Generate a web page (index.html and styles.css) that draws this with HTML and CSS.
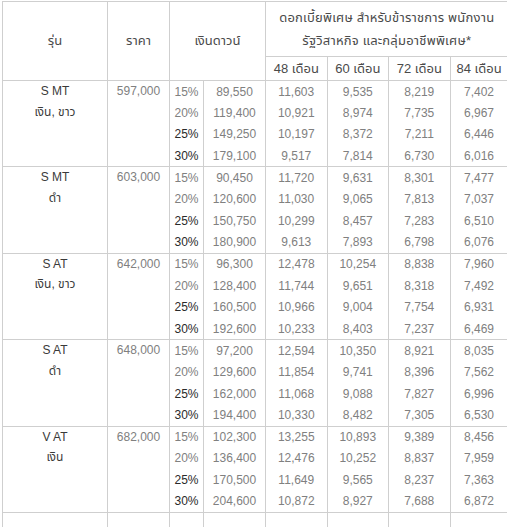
FILE: index.html
```html
<!DOCTYPE html>
<html lang="th">
<head>
<meta charset="utf-8">
<title>ตารางผ่อน</title>
<link rel="stylesheet" href="styles.css">
</head>
<body>
<table class="price-table">
  <colgroup>
    <col class="c-model"><col class="c-price"><col class="c-pct"><col class="c-down">
    <col class="c-m"><col class="c-m"><col class="c-m"><col class="c-last">
  </colgroup>
  <thead>
    <tr class="h1">
      <th rowspan="2">รุ่น</th>
      <th rowspan="2">ราคา</th>
      <th rowspan="2" colspan="2">เงินดาวน์</th>
      <th colspan="4" class="special">ดอกเบี้ยพิเศษ สำหรับข้าราชการ พนักงาน<br>รัฐวิสาหกิจ และกลุ่มอาชีพพิเศษ*</th>
    </tr>
    <tr class="h2">
      <th>48 เดือน</th><th>60 เดือน</th><th>72 เดือน</th><th>84 เดือน</th>
    </tr>
  </thead>
  <tbody>
    <tr><td rowspan="4" class="model">S MT<br>เงิน, ขาว</td><td rowspan="4" class="price">597,000</td><td class="pct">15%</td><td>89,550</td><td>11,603</td><td>9,535</td><td>8,219</td><td>7,402</td></tr>
    <tr><td class="pct">20%</td><td>119,400</td><td>10,921</td><td>8,974</td><td>7,735</td><td>6,967</td></tr>
    <tr><td class="pct dark">25%</td><td>149,250</td><td>10,197</td><td>8,372</td><td>7,211</td><td>6,446</td></tr>
    <tr><td class="pct dark">30%</td><td>179,100</td><td>9,517</td><td>7,814</td><td>6,730</td><td>6,016</td></tr>
  </tbody>
  <tbody>
    <tr><td rowspan="4" class="model">S MT<br>ดำ</td><td rowspan="4" class="price">603,000</td><td class="pct">15%</td><td>90,450</td><td>11,720</td><td>9,631</td><td>8,301</td><td>7,477</td></tr>
    <tr><td class="pct">20%</td><td>120,600</td><td>11,030</td><td>9,065</td><td>7,813</td><td>7,037</td></tr>
    <tr><td class="pct dark">25%</td><td>150,750</td><td>10,299</td><td>8,457</td><td>7,283</td><td>6,510</td></tr>
    <tr><td class="pct dark">30%</td><td>180,900</td><td>9,613</td><td>7,893</td><td>6,798</td><td>6,076</td></tr>
  </tbody>
  <tbody>
    <tr><td rowspan="4" class="model">S AT<br>เงิน, ขาว</td><td rowspan="4" class="price">642,000</td><td class="pct">15%</td><td>96,300</td><td>12,478</td><td>10,254</td><td>8,838</td><td>7,960</td></tr>
    <tr><td class="pct">20%</td><td>128,400</td><td>11,744</td><td>9,651</td><td>8,318</td><td>7,492</td></tr>
    <tr><td class="pct dark">25%</td><td>160,500</td><td>10,966</td><td>9,004</td><td>7,754</td><td>6,931</td></tr>
    <tr><td class="pct dark">30%</td><td>192,600</td><td>10,233</td><td>8,403</td><td>7,237</td><td>6,469</td></tr>
  </tbody>
  <tbody>
    <tr><td rowspan="4" class="model">S AT<br>ดำ</td><td rowspan="4" class="price">648,000</td><td class="pct">15%</td><td>97,200</td><td>12,594</td><td>10,350</td><td>8,921</td><td>8,035</td></tr>
    <tr><td class="pct">20%</td><td>129,600</td><td>11,854</td><td>9,741</td><td>8,396</td><td>7,562</td></tr>
    <tr><td class="pct dark">25%</td><td>162,000</td><td>11,068</td><td>9,088</td><td>7,827</td><td>6,996</td></tr>
    <tr><td class="pct dark">30%</td><td>194,400</td><td>10,330</td><td>8,482</td><td>7,305</td><td>6,530</td></tr>
  </tbody>
  <tbody>
    <tr><td rowspan="4" class="model">V AT<br>เงิน</td><td rowspan="4" class="price">682,000</td><td class="pct">15%</td><td>102,300</td><td>13,255</td><td>10,893</td><td>9,389</td><td>8,456</td></tr>
    <tr><td class="pct">20%</td><td>136,400</td><td>12,476</td><td>10,252</td><td>8,837</td><td>7,959</td></tr>
    <tr><td class="pct dark">25%</td><td>170,500</td><td>11,649</td><td>9,565</td><td>8,237</td><td>7,363</td></tr>
    <tr><td class="pct dark">30%</td><td>204,600</td><td>10,872</td><td>8,927</td><td>7,688</td><td>6,872</td></tr>
  </tbody>
  <tbody>
    <tr><td></td><td></td><td></td><td></td><td></td><td></td><td></td><td></td></tr>
  </tbody>
</table>
</body>
</html>
```
FILE: styles.css
```css
html, body {
  margin: 0;
  padding: 0;
  background: #fff;
}
body {
  padding: 1px 0 0 2px;
  font-family: "Liberation Sans", "Noto Sans Thai", "Noto Sans", sans-serif;
  font-size: 12px;
  color: #808080;
}
.price-table {
  border-collapse: collapse;
  table-layout: fixed;
  width: 505px;
}
.c-model { width: 105px; }
.c-price { width: 62px; }
.c-pct { width: 34px; }
.c-down { width: 62px; }
.c-m { width: 61.5px; }
.c-last { width: 58px; }
.price-table th,
.price-table td {
  border-left: 1px solid #cfcfcf;
  border-right: 1px solid #cfcfcf;
  padding: 0;
  text-align: center;
  font-weight: normal;
}
.price-table thead th {
  border: 1px solid #cfcfcf;
  color: #4a4a4a;
  font-size: 13px;
}
.h1 { height: 55px; }
.h1 .special { line-height: 23px; letter-spacing: 0.2px; }
.h2 { height: 24px; }
.price-table tbody {
  border-top: 1px solid #cfcfcf;
}
.price-table tbody tr { height: 21.6px; }
.price-table td.model,
.price-table td.price {
  vertical-align: top;
  line-height: 20.5px;
  padding-top: 0;
}
.price-table td.model { color: #3a3a3a; }
.price-table td.pct.dark { color: #2a2a2a; }
```
